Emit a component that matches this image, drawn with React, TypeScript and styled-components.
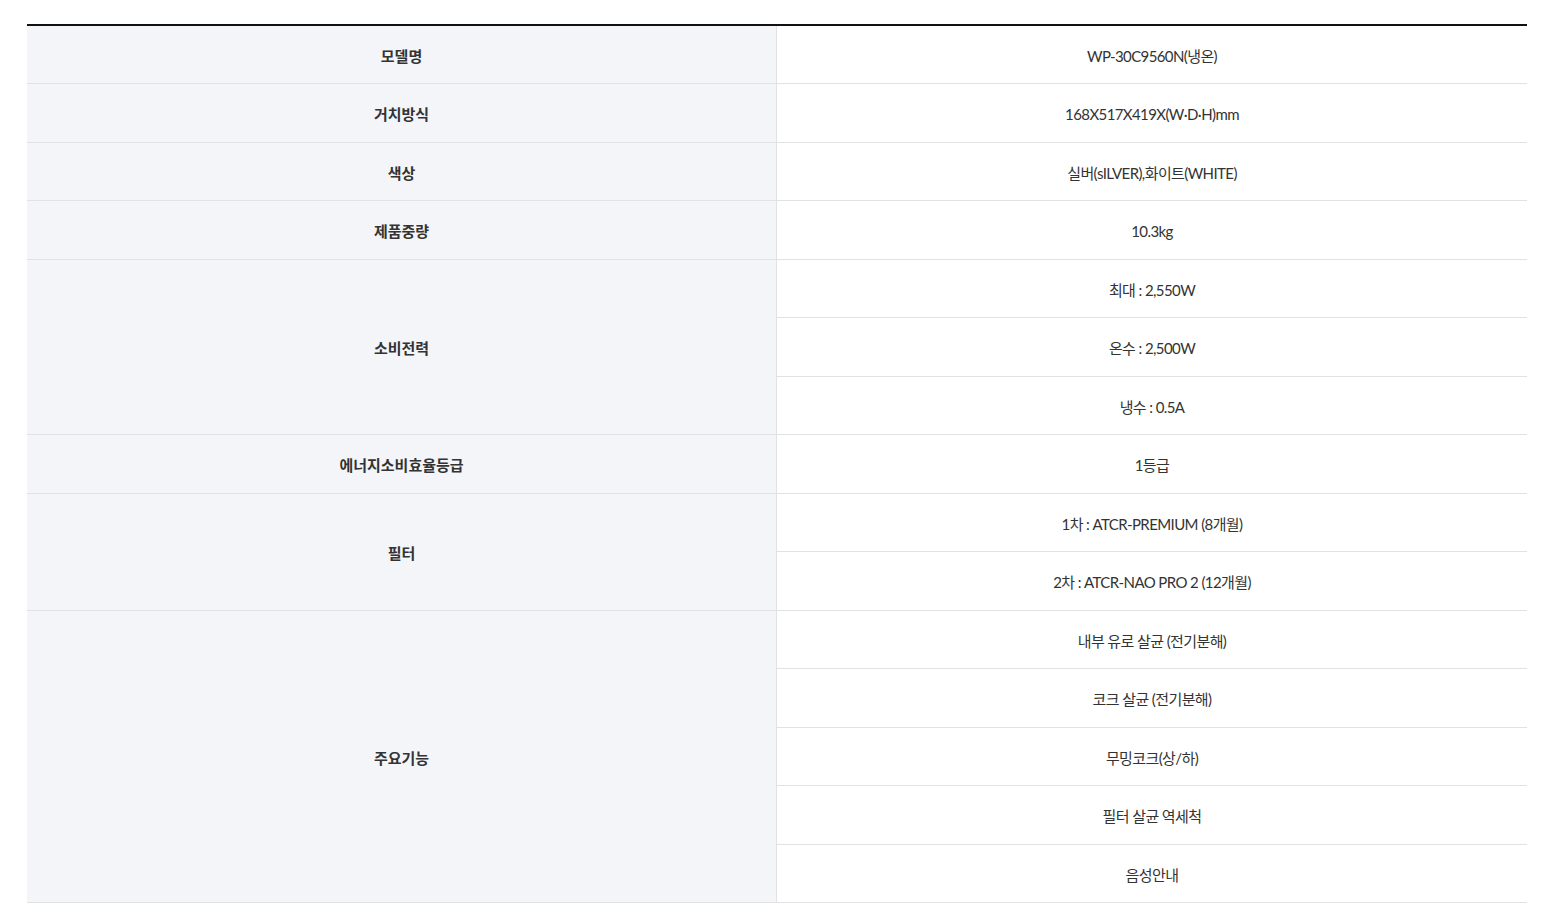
import React from "react";
import styled, { createGlobalStyle } from "styled-components";

const GlobalStyle = createGlobalStyle`
  html, body { margin: 0; padding: 0; background: #fff; }
  body { font-family: Lato, "Noto Sans CJK KR", sans-serif; }
`;

const Page = styled.div`
  padding: 24px 0 0 27px;
`;

const SpecTable = styled.table`
  width: 1500px;
  border-collapse: collapse;
  table-layout: fixed;
  border-top: 2px solid #111;
`;

const Row = styled.tr`
  height: 58.5px;
`;

const HeadCell = styled.th`
  width: 749px;
  background: #f4f5f9;
  border-bottom: 1px solid #e2e2e2;
  border-right: 1px solid #e2e2e2;
  padding: 2px 0 0;
  text-align: center;
  vertical-align: middle;
  font-family: "Noto Sans CJK KR", sans-serif;
  font-size: 15px;
  font-weight: 700;
  letter-spacing: 0;
  color: #333;
`;

const ValueCell = styled.td`
  border-bottom: 1px solid #e2e2e2;
  padding: 2px 0 0;
  text-align: center;
  vertical-align: middle;
  font-family: Lato, "Noto Sans CJK KR", sans-serif;
  font-size: 15px;
  font-weight: 400;
  letter-spacing: -0.6px;
  color: #333;
`;

type Spec = { label: string; values: string[] };

const specs: Spec[] = [
  { label: "모델명", values: ["WP-30C9560N(냉온)"] },
  { label: "거치방식", values: ["168X517X419X(W·D·H)mm"] },
  { label: "색상", values: ["실버(sILVER),화이트(WHITE)"] },
  { label: "제품중량", values: ["10.3kg"] },
  { label: "소비전력", values: ["최대 : 2,550W", "온수 : 2,500W", "냉수 : 0.5A"] },
  { label: "에너지소비효율등급", values: ["1등급"] },
  { label: "필터", values: ["1차 : ATCR-PREMIUM (8개월)", "2차 : ATCR-NAO PRO 2 (12개월)"] },
  {
    label: "주요기능",
    values: ["내부 유로 살균 (전기분해)", "코크 살균 (전기분해)", "무밍코크(상/하)", "필터 살균 역세척", "음성안내"],
  },
];

export default function App() {
  return (
    <>
      <GlobalStyle />
      <Page>
        <SpecTable>
          <tbody>
            {specs.map((s) =>
              s.values.map((v, i) => (
                <Row key={s.label + i}>
                  {i === 0 && <HeadCell rowSpan={s.values.length}>{s.label}</HeadCell>}
                  <ValueCell>{v}</ValueCell>
                </Row>
              ))
            )}
          </tbody>
        </SpecTable>
      </Page>
    </>
  );
}
